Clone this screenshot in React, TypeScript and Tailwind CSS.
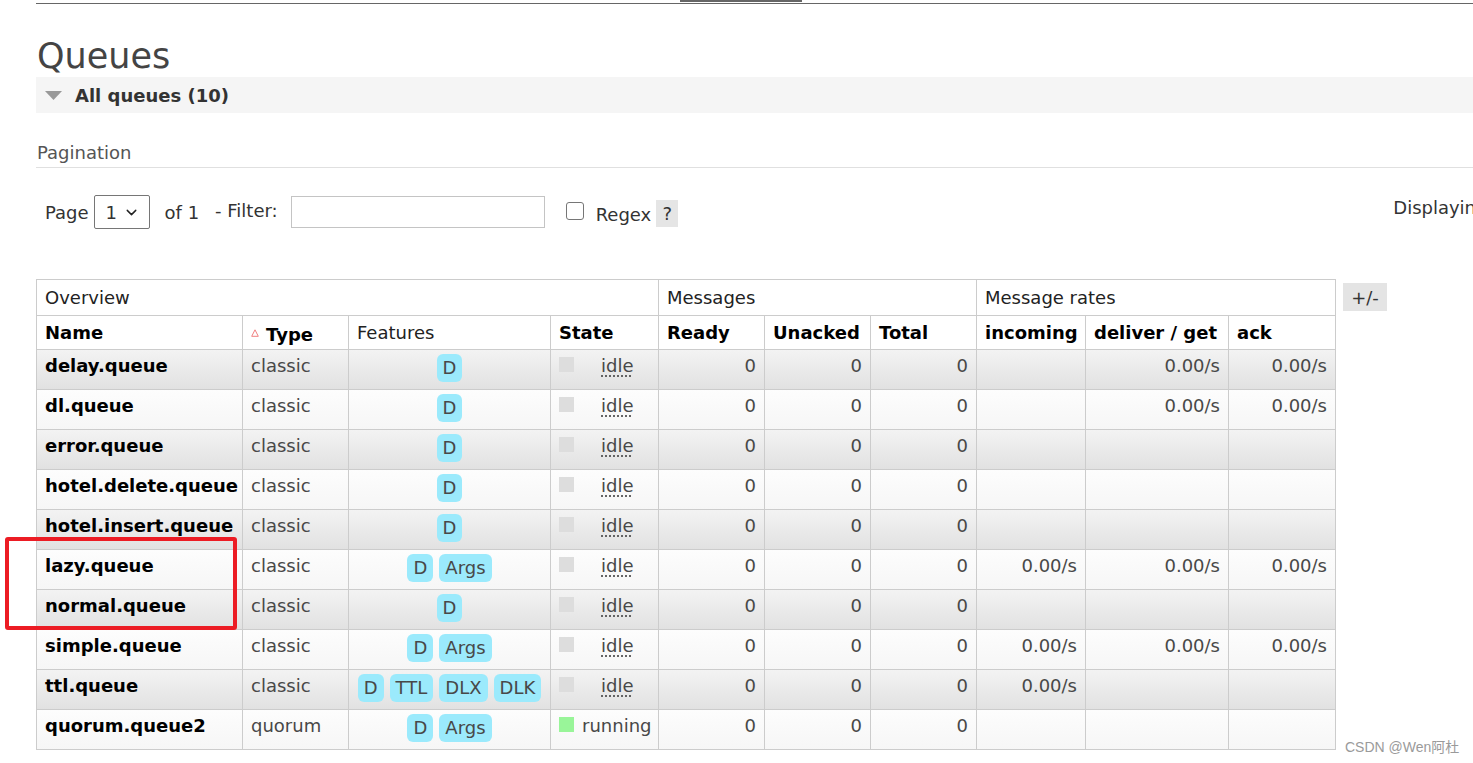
import React from 'react'
import { ChevronDown } from 'lucide-react'

type Queue = {
  name: string
  type: string
  features: string[]
  state: 'idle' | 'running'
  incoming?: string
  deliver?: string
  ack?: string
}

const queues: Queue[] = [
  { name: 'delay.queue', type: 'classic', features: ['D'], state: 'idle', deliver: '0.00/s', ack: '0.00/s' },
  { name: 'dl.queue', type: 'classic', features: ['D'], state: 'idle', deliver: '0.00/s', ack: '0.00/s' },
  { name: 'error.queue', type: 'classic', features: ['D'], state: 'idle' },
  { name: 'hotel.delete.queue', type: 'classic', features: ['D'], state: 'idle' },
  { name: 'hotel.insert.queue', type: 'classic', features: ['D'], state: 'idle' },
  {
    name: 'lazy.queue',
    type: 'classic',
    features: ['D', 'Args'],
    state: 'idle',
    incoming: '0.00/s',
    deliver: '0.00/s',
    ack: '0.00/s',
  },
  { name: 'normal.queue', type: 'classic', features: ['D'], state: 'idle' },
  {
    name: 'simple.queue',
    type: 'classic',
    features: ['D', 'Args'],
    state: 'idle',
    incoming: '0.00/s',
    deliver: '0.00/s',
    ack: '0.00/s',
  },
  { name: 'ttl.queue', type: 'classic', features: ['D', 'TTL', 'DLX', 'DLK'], state: 'idle', incoming: '0.00/s' },
  { name: 'quorum.queue2', type: 'quorum', features: ['D', 'Args'], state: 'running' },
]

const cell = 'border border-[#cccccc] px-[8px] pt-[2px] align-top'
const num = 'border border-[#cccccc] px-[8px] pt-[2px] align-top text-right'
const head = 'border border-[#cccccc] px-[8px] text-left align-middle'

const Badge = ({ label }: { label: string }) => (
  <span className="inline-block h-[28px] rounded-[6px] bg-[#9beafc] px-[6px] leading-[28px] text-[#484848]">
    {label}
  </span>
)

const QueueRow = ({ queue, index }: { queue: Queue; index: number }) => {
  const rowBg =
    index % 2 === 0
      ? 'h-[40px] bg-linear-to-b from-[#f3f3f3] to-[#e1e1e1]'
      : 'h-[40px] bg-linear-to-b from-[#fdfdfd] to-[#f6f6f6]'

  return (
    <tr className={rowBg}>
      <td className={`${cell} whitespace-nowrap font-bold text-black`}>{queue.name}</td>
      <td className={cell}>{queue.type}</td>
      <td className="border border-[#cccccc] px-[8px] pt-[4px] align-top">
        <div className="flex flex-nowrap justify-center gap-[6px]">
          {queue.features.map((f) => (
            <Badge key={f} label={f} />
          ))}
        </div>
      </td>
      <td className={cell}>
        <div className="flex items-start whitespace-nowrap">
          <span
            className={
              queue.state === 'idle'
                ? 'mt-[5px] h-[15px] w-[15px] shrink-0 bg-[#dddddd]'
                : 'mt-[5px] h-[15px] w-[15px] shrink-0 bg-[#99f599]'
            }
          />
          {queue.state === 'idle' ? (
            <span className="ml-[27px] underline decoration-[#555555] decoration-dotted underline-offset-[4px]">
              idle
            </span>
          ) : (
            <span className="ml-[8px]">running</span>
          )}
        </div>
      </td>
      <td className={num}>0</td>
      <td className={num}>0</td>
      <td className={num}>0</td>
      <td className={num}>{queue.incoming}</td>
      <td className={num}>{queue.deliver}</td>
      <td className={num}>{queue.ack}</td>
    </tr>
  )
}

export default function App() {
  return (
    <div className="relative h-[763px] w-[1473px] overflow-hidden bg-white font-['DejaVu_Sans',sans-serif] text-[18px] text-[#484848]">
      <div className="pl-[36px]">
        <div className="h-[4px] border-b border-[#666666]">
          <div className="ml-[644px] h-[2px] w-[122px] bg-[#666666]" />
        </div>

        <h1 className="mt-[32px] pl-[1px] text-[35px] leading-[40px] text-[#444444]">Queues</h1>

        <div className="mt-[1px] flex h-[36px] items-center bg-[#f5f5f5] pl-[9px]">
          <svg width="17" height="9" viewBox="0 0 17 9">
            <polygon points="0,0 17,0 8.5,9" fill="#999999" />
          </svg>
          <span className="ml-[13px] font-bold text-[#333333]">All queues (10)</span>
        </div>

        <div className="mt-[28px] border-b border-[#e0e0e0] pb-[3px] pl-[1px] leading-[23px] text-[#555555]">
          Pagination
        </div>

        <div className="mt-[27px] flex h-[34px] items-center whitespace-nowrap text-[#333333]">
          <span className="shrink-0 pl-[9px]">Page</span>
          <div className="ml-[5px] flex h-[34px] w-[56px] shrink-0 items-center rounded-[2px] border border-[#767676] pl-[11px]">
            <span>1</span>
            <ChevronDown size={17} strokeWidth={2} className="ml-auto mr-[9px] text-[#222222]" />
          </div>
          <span className="ml-[15px] shrink-0">of 1</span>
          <span className="mb-[3px] ml-[16px] shrink-0">- Filter:</span>
          <div className="ml-[13px] h-[32px] w-[254px] shrink-0 border border-[#c4c4c4]" />
          <div className="mb-[2px] ml-[21px] h-[18px] w-[18px] shrink-0 rounded-[3px] border border-[#767676]" />
          <span className="ml-[12px] mt-[4px] shrink-0">Regex</span>
          <span className="ml-[5px] mt-[3px] flex h-[27px] w-[22px] shrink-0 items-center justify-center bg-[#e5e5e5]">
            ?
          </span>
          <span className="mb-[10px] ml-[715px] shrink-0">Displaying 10 items , page size up to: 100</span>
        </div>

        <div className="mt-[50px] flex items-start">
          <table className="w-[1299px] shrink-0 table-fixed border-collapse border border-[#cccccc]">
            <colgroup>
              <col className="w-[206px]" />
              <col className="w-[106px]" />
              <col className="w-[202px]" />
              <col className="w-[108px]" />
              <col className="w-[106px]" />
              <col className="w-[106px]" />
              <col className="w-[106px]" />
              <col className="w-[109px]" />
              <col className="w-[143px]" />
              <col className="w-[107px]" />
            </colgroup>
            <thead className="text-[#222222]">
              <tr className="h-[36px] bg-white">
                <th colSpan={4} className={`${head} font-normal`}>
                  Overview
                </th>
                <th colSpan={3} className={`${head} font-normal`}>
                  Messages
                </th>
                <th colSpan={3} className={`${head} font-normal`}>
                  Message rates
                </th>
              </tr>
              <tr className="h-[34px] bg-white">
                <th className={`${head} font-bold text-black`}>Name</th>
                <th className={`${head} font-bold text-black`}>
                  <span className="inline-flex items-center">
                    <svg width="8" height="8" viewBox="0 0 8 8" className="mb-[2px] mr-[7px]">
                      <polygon points="4,0.8 7.3,7.3 0.7,7.3" fill="none" stroke="#f08080" strokeWidth="1" />
                    </svg>
                    Type
                  </span>
                </th>
                <th className={`${head} font-normal`}>Features</th>
                <th className={`${head} font-bold text-black`}>State</th>
                <th className={`${head} font-bold text-black`}>Ready</th>
                <th className={`${head} font-bold text-black`}>Unacked</th>
                <th className={`${head} font-bold text-black`}>Total</th>
                <th className={`${head} whitespace-nowrap font-bold text-black`}>incoming</th>
                <th className={`${head} whitespace-nowrap font-bold text-black`}>deliver / get</th>
                <th className={`${head} font-bold text-black`}>ack</th>
              </tr>
            </thead>
            <tbody>
              {queues.map((q, i) => (
                <QueueRow key={q.name} queue={q} index={i} />
              ))}
            </tbody>
          </table>
          <div className="ml-[7px] mt-[4px] flex h-[28px] w-[44px] shrink-0 items-center justify-center bg-[#e4e4e4] text-[#333333]">
            +/-
          </div>
        </div>
      </div>

      <div className="absolute left-[5px] top-[537px] h-[93px] w-[232px] rounded-[3px] border-[4px] border-[#ec1c24]" />

      <div className="absolute left-[1345px] top-[738px] font-['Liberation_Sans','Noto_Sans_CJK_SC',sans-serif] text-[14px] leading-[18px] text-[#9a9a9a]">
        CSDN @Wen阿杜
      </div>
    </div>
  )
}
